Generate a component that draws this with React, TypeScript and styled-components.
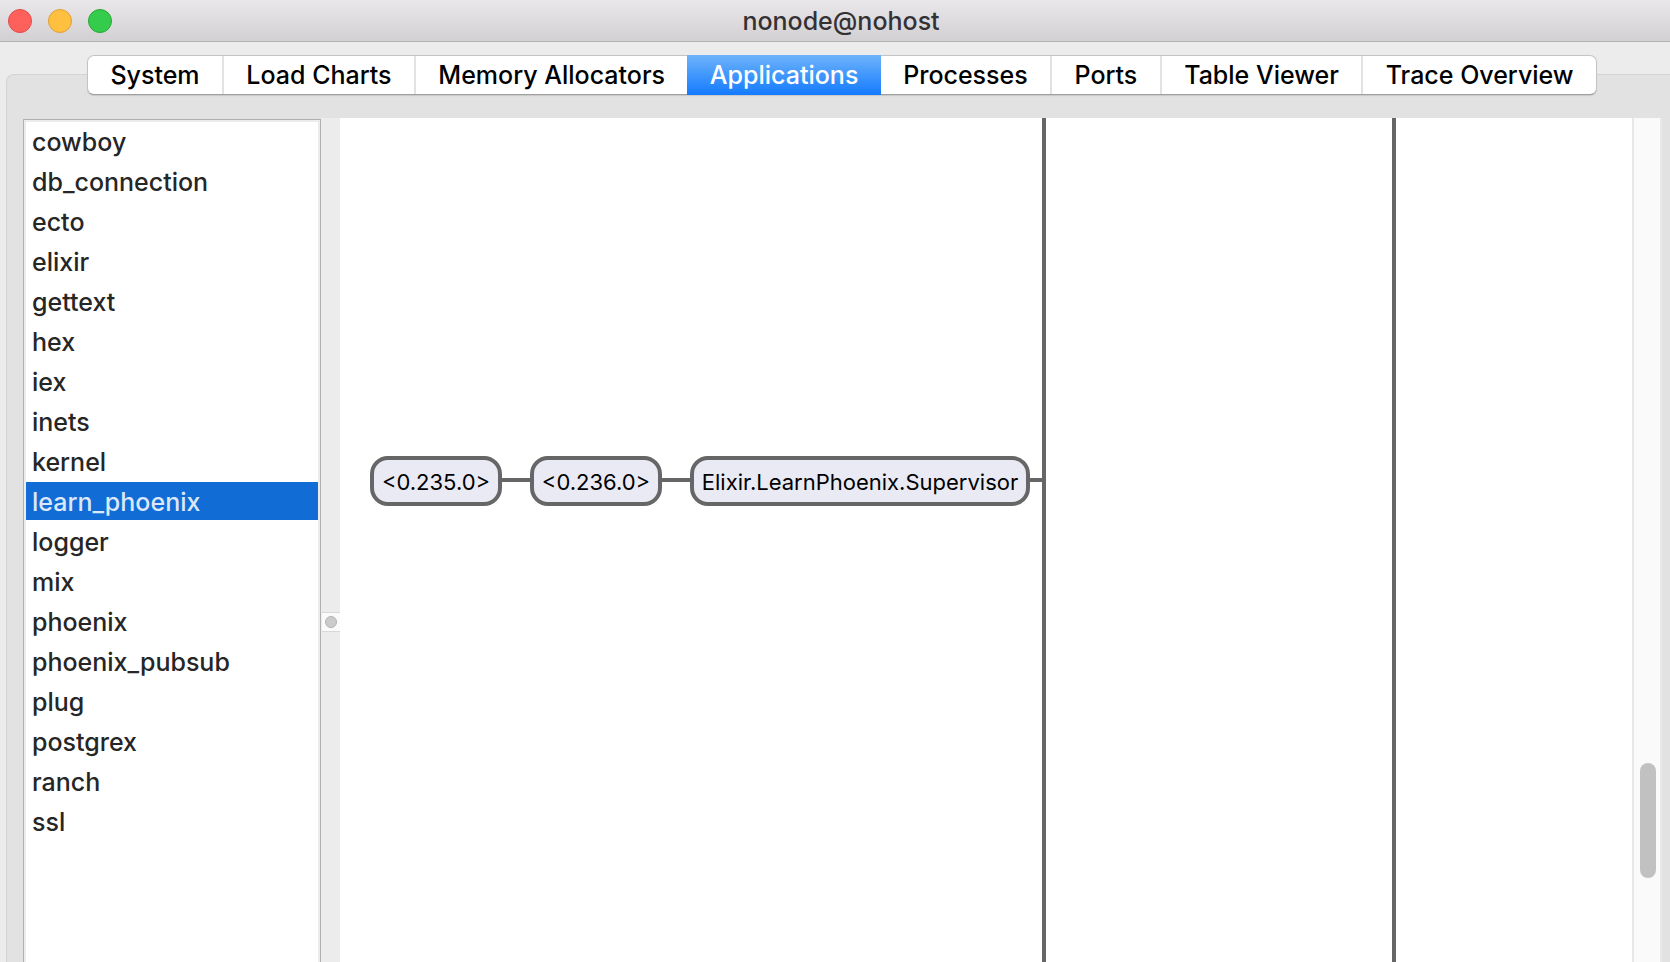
import React, { useState } from "react";
import styled, { createGlobalStyle } from "styled-components";

const GlobalStyle = createGlobalStyle`
  * { box-sizing: border-box; }
  body {
    margin: 0;
    background: #ececec;
    font-family: Inter, "Liberation Sans", sans-serif;
    font-size: 25px;
    font-weight: 450;
    overflow: hidden;
  }
  button { font: inherit; border: 0; margin: 0; cursor: default; }
`;

const Window = styled.div`
  display: flex;
  flex-direction: column;
  height: 100vh;
  background: #ececec;
`;

const TitleBar = styled.header`
  display: grid;
  grid-template-columns: 1fr auto 1fr;
  align-items: center;
  flex: none;
  height: 42px;
  padding: 0 8px;
  background: linear-gradient(#e9e7ea, #d2d0d3);
  border-bottom: 1px solid #b1afb2;
`;

const WindowControls = styled.div`
  display: flex;
  gap: 16px;
`;

const WindowButton = styled.button<{ $fill: string; $edge: string }>`
  width: 24px;
  height: 24px;
  padding: 0;
  border: 1px solid ${(p) => p.$edge};
  border-radius: 50%;
  background: ${(p) => p.$fill};
`;

const Title = styled.h1`
  margin: 0;
  padding-left: 12px;
  font-size: 25px;
  font-weight: inherit;
  line-height: 40px;
  color: #333134;
`;

const TabBar = styled.div`
  position: relative;
  z-index: 1;
  display: flex;
  flex: none;
  height: 40px;
  margin: 13px 73px 0 87px;
  background: #fff;
  border: 1px solid #c4c4c4;
  border-bottom-color: #a0a0a0;
  border-radius: 7px;
  box-shadow: 0 1px 1px rgba(0, 0, 0, 0.12);
`;

const Tab = styled.button<{ $active: boolean; $divided: boolean }>`
  flex: 1 1 auto;
  height: ${(p) => (p.$active ? 40 : 38)}px;
  margin: ${(p) => (p.$active ? -1 : 0)}px 0;
  padding: 0 16px;
  line-height: 38px;
  white-space: nowrap;
  color: ${(p) => (p.$active ? "#fff" : "#000")};
  background: ${(p) => (p.$active ? "linear-gradient(#6eb3fa, #147bff)" : "transparent")};
  border-right: ${(p) => (p.$divided ? "2px solid #e2e2e2" : "0")};
`;

const Panel = styled.main`
  display: flex;
  flex: 1;
  min-height: 0;
  margin: -21px 0 0 6px;
  padding: 43px 8px 0 16px;
  background: #e2e2e2;
  border: 1px solid #d4d4d4;
  border-width: 1px 0 0 1px;
  border-top-left-radius: 8px;
`;

const AppList = styled.ul`
  display: flex;
  flex-direction: column;
  gap: 2px;
  flex: none;
  width: 298px;
  margin: 1px 0 -2px;
  padding: 2px 2px 0;
  list-style: none;
  overflow: hidden;
  background: #fff;
  border: 1px solid #b0b0b0;
  border-bottom: 0;
  box-shadow: inset 0 0 0 2px #ececec;
`;

const AppItem = styled.button<{ $selected: boolean }>`
  display: block;
  width: 100%;
  height: 38px;
  padding: 2px 6px 0;
  text-align: left;
  line-height: 36px;
  color: ${(p) => (p.$selected ? "#dce8f8" : "#262626")};
  background: ${(p) => (p.$selected ? "#116cd6" : "transparent")};
`;

const Splitter = styled.div`
  flex: none;
  width: 19px;
  padding: 494px 0 0 1px;
  background: #ececec;
`;

const SplitterHandle = styled.div`
  display: flex;
  align-items: center;
  justify-content: center;
  height: 20px;
  background: #fafafa;
  border: 1px solid #d8d8d8;
  border-width: 1px 0;
`;

const Grip = styled.span`
  width: 12px;
  height: 12px;
  border-radius: 50%;
  background: #cbcbcb;
  border: 1px solid #b2b2b2;
`;

const Canvas = styled.section`
  position: relative;
  flex: 1;
  min-width: 0;
  overflow: hidden;
  background: #fff;
`;

const Trunk = styled.div<{ $x: number }>`
  position: absolute;
  top: 0;
  bottom: 0;
  left: ${(p) => p.$x}px;
  width: 4px;
  background: #666;
`;

const ProcessChain = styled.div`
  position: absolute;
  top: 338px;
  left: 30px;
  display: flex;
  align-items: center;
`;

const ProcessNode = styled.button<{ $width: number }>`
  width: ${(p) => p.$width}px;
  height: 50px;
  padding: 2px 0 0;
  font-size: 22px;
  font-weight: 400;
  line-height: 40px;
  white-space: nowrap;
  color: #000;
  background: #eaeaf4;
  border: 4px solid #666;
  border-radius: 18px;
`;

const Link = styled.span<{ $length: number }>`
  width: ${(p) => p.$length}px;
  height: 4px;
  margin-bottom: 2px;
  background: #666;
`;

const ScrollTrack = styled.div`
  flex: none;
  width: 30px;
  padding: 645px 4px 0 6px;
  background: #fafafa;
  border: solid #e8e8e8;
  border-width: 0 2px;
`;

const ScrollThumb = styled.div`
  width: 16px;
  height: 115px;
  border-radius: 8px;
  background: #c1c1c1;
`;

const tabs = [
  "System",
  "Load Charts",
  "Memory Allocators",
  "Applications",
  "Processes",
  "Ports",
  "Table Viewer",
  "Trace Overview",
];

const applications = [
  "cowboy",
  "db_connection",
  "ecto",
  "elixir",
  "gettext",
  "hex",
  "iex",
  "inets",
  "kernel",
  "learn_phoenix",
  "logger",
  "mix",
  "phoenix",
  "phoenix_pubsub",
  "plug",
  "postgrex",
  "ranch",
  "ssl",
];

const processes = [
  { name: "<0.235.0>", width: 132, link: 28 },
  { name: "<0.236.0>", width: 132, link: 28 },
  { name: "Elixir.LearnPhoenix.Supervisor", width: 340, link: 12 },
];

export default function App() {
  const [tab, setTab] = useState("Applications");
  const [selected, setSelected] = useState("learn_phoenix");
  const active = tabs.indexOf(tab);

  return (
    <Window>
      <GlobalStyle />
      <TitleBar>
        <WindowControls>
          <WindowButton aria-label="Close" $fill="#fe605c" $edge="#e24a48" />
          <WindowButton aria-label="Minimize" $fill="#ffc040" $edge="#dfa035" />
          <WindowButton aria-label="Zoom" $fill="#35cb4b" $edge="#27a836" />
        </WindowControls>
        <Title>nonode@nohost</Title>
      </TitleBar>
      <TabBar role="tablist">
        {tabs.map((name, i) => (
          <Tab
            key={name}
            role="tab"
            aria-selected={i === active}
            $active={i === active}
            $divided={i !== active && i !== active - 1 && i < tabs.length - 1}
            onClick={() => setTab(name)}
          >
            {name}
          </Tab>
        ))}
      </TabBar>
      <Panel>
        <AppList aria-label="Applications">
          {applications.map((name) => (
            <li key={name}>
              <AppItem
                aria-pressed={name === selected}
                $selected={name === selected}
                onClick={() => setSelected(name)}
              >
                {name}
              </AppItem>
            </li>
          ))}
        </AppList>
        <Splitter role="separator" aria-orientation="vertical">
          <SplitterHandle>
            <Grip />
          </SplitterHandle>
        </Splitter>
        <Canvas aria-label="Supervision tree">
          <Trunk $x={702} />
          <Trunk $x={1052} />
          <ProcessChain>
            {processes.map((p) => (
              <React.Fragment key={p.name}>
                <ProcessNode $width={p.width}>{p.name}</ProcessNode>
                <Link $length={p.link} />
              </React.Fragment>
            ))}
          </ProcessChain>
        </Canvas>
        <ScrollTrack>
          <ScrollThumb />
        </ScrollTrack>
      </Panel>
    </Window>
  );
}
